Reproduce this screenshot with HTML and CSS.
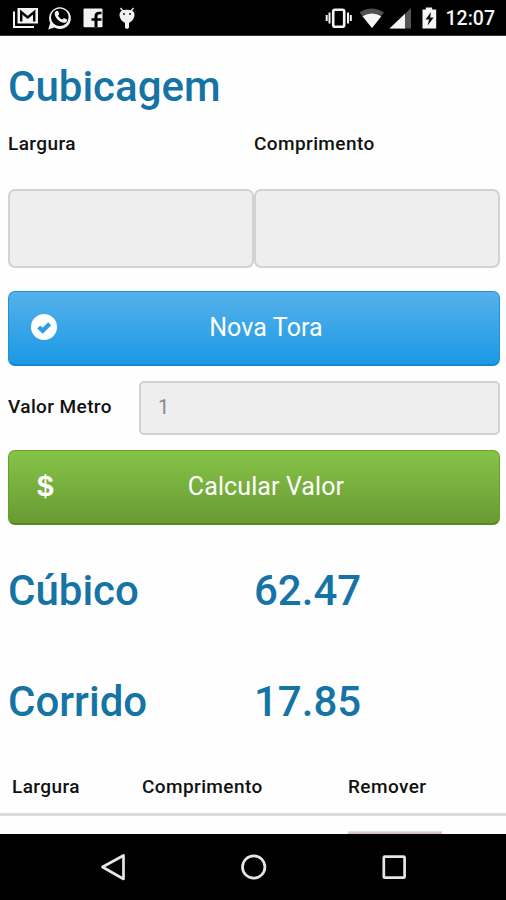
FILE: index.html
```html
<!DOCTYPE html>
<html lang="pt-BR">
<head>
<meta charset="utf-8">
<title>Cubicagem</title>
<link rel="stylesheet" href="styles.css">
</head>
<body>
<div class="phone">
  <header class="status">
    <svg width="150" height="36" viewBox="0 0 150 36" fill="#f2f2f2">
      <path d="M17.500 8H38v15.500H17.500z"/>
      <path d="M21.200 21.500V12l6.500 5.500 6.500-5.500v9.500" fill="none" stroke="#000" stroke-width="2.400"/>
      <path d="M14 11.500V27h20" fill="none" stroke="#f2f2f2" stroke-width="2"/>
      <path d="M48.200 29.500l2-6.500a10.900 10.900 0 1 1 4.300 4.600z"/>
      <circle cx="59.800" cy="17.300" r="8.800" fill="#000"/>
      <path d="M55.500 11.500c1.500-1.300 2.600-1 3.300 1.200l.5 1.500-1.300 1.500c1.200 2 2.500 3 4.300 3.800l1.700-1.400 3 1.500c.8.500-.4 3-2 3.200-4.500.8-10.300-5.300-10.300-8.800 0-1 .2-1.900.8-2.500z"/>
      <path d="M84.500 8.500h17q1 0 1 1v16.800q0 1-1 1h-17q-1 0-1-1V9.500q0-1 1-1z"/>
      <path d="M94.500 27.300v-6.500H91.500v-2.600h3v-2q0-4.500 4.500-4.500h2.500v2.600h-2q-2 0-2 2v1.900h4v2.600h-4v6.500z" fill="#000"/>
      <path d="M119.500 14.500q0-4.800 7.500-4.800t7.500 4.800c0 4-2.500 7-5.500 8.300v5q-2 2.200-4 0v-5c-3-1.300-5.500-4.300-5.500-8.300z"/>
      <path d="M123 11l-2.500-3M131 11l2.500-3" stroke="#f2f2f2" stroke-width="1.300"/>
      <circle cx="124" cy="14" r=".9" fill="#000"/><circle cx="130" cy="14" r=".9" fill="#000"/>
    </svg>
    <svg class="system" width="120" height="36" viewBox="320 0 120 36" fill="#f5f5f5">
      <rect x="333.200" y="9.700" width="11" height="17" rx="1.800" fill="none" stroke="#f5f5f5" stroke-width="2.600"/>
      <path d="M329.500 12.500v11M326.700 15v6M348 12.500v11M350.800 15v6" stroke="#f5f5f5" stroke-width="2"/>
      <path d="M359.500 12.500q12-8 24.500 0L372 28z" fill="#505050"/>
      <path d="M362.500 16.200q9.500-5.500 18.800 0L372 28z"/>
      <path d="M411 8v20.500h-21z" fill="#555"/>
      <path d="M405 13.800v14.700h-15.500z"/>
      <path d="M422.500 9.500h3.300V7.500h6.400v2h4v19h-13.700z"/>
      <path d="M431 12l-5.500 7.500h3.500l-1.300 6 6-8h-3.500z" fill="#111"/>
    </svg>
    <span class="clock">12:07</span>
  </header>

  <main class="content">
    <h1 class="title">Cubicagem</h1>
    <div class="pair labels"><label for="largura">Largura</label><label for="comprimento">Comprimento</label></div>
    <div class="pair"><input id="largura" class="field"><input id="comprimento" class="field"></div>
    <button class="btn blue">
      <svg class="btn-icon" width="28" height="28" viewBox="0 0 28 28"><circle cx="14" cy="14" r="13" fill="#fff"/><path d="M8.700 14l4 3.700 7-7" fill="none" stroke="#2e9fe2" stroke-width="4.400"/></svg>
      <span>Nova Tora</span>
    </button>
    <div class="price"><label for="valor">Valor Metro</label><input id="valor" class="field small" value="1"></div>
    <button class="btn green"><span class="btn-icon dollar">$</span><span>Calcular Valor</span></button>
    <div class="pair result"><span>Cúbico</span><span>62.47</span></div>
    <div class="pair result"><span>Corrido</span><span>17.85</span></div>
  </main>
  <div class="table-head"><span>Largura</span><span>Comprimento</span><span>Remover</span></div>
  <div class="table-row"><span class="remove"></span></div>

  <nav class="navbar">
    <svg width="506" height="66" viewBox="0 0 506 66" fill="none" stroke="#e6e6e6" stroke-width="2.700" stroke-linejoin="round">
      <path d="M123.500 21.500v23.500L102.500 33z"/>
      <circle cx="253.700" cy="33" r="11.200"/>
      <rect x="383.800" y="22.700" width="20.800" height="21" rx="1"/>
    </svg>
  </nav>
</div>
</body>
</html>
```

FILE: styles.css
```css
* { box-sizing: border-box; }

body {
  margin: 0;
  background: #fefefe;
  color: #111;
  font-family: Roboto, "Liberation Sans", sans-serif;
}

.phone {
  display: flex;
  flex-direction: column;
  width: 506px;
  height: 900px;
  overflow: hidden;
}

svg { display: block; }

.status {
  display: flex;
  flex: none;
  height: 36px;
  padding-right: 11px;
  background: #000;
  border-bottom: 1px solid #333;
}

.system { margin-left: 170px; }

.clock {
  margin-left: auto;
  color: #f5f5f5;
  font-size: 19.5px;
  font-weight: 500;
  line-height: 38px;
}

.content {
  flex: none;
  height: 722px;
  padding: 0 6px 0 8px;
}

.title, .result {
  color: #1574a5;
  font-size: 42px;
  font-weight: 500;
}

.title {
  margin: 0;
  padding-top: 26px;
  line-height: 50px;
}

.pair {
  display: grid;
  grid-template-columns: 1fr 1fr;
}

label, .table-head {
  font-size: 19px;
  font-weight: 500;
  letter-spacing: 0.4px;
}

.labels {
  height: 77px;
  padding-top: 21px;
  line-height: 22px;
}

.field {
  width: 100%;
  min-width: 0;
  height: 79px;
  padding: 0 17px;
  border: 2px solid #d2d2d2;
  border-radius: 7px;
  background: #eee;
  color: #888;
  font: 20px Roboto, "Liberation Sans", sans-serif;
}

.btn {
  display: flex;
  position: relative;
  align-items: center;
  justify-content: center;
  width: 492px;
  height: 75px;
  padding: 0 0 2px 24px;
  border-radius: 7px;
  color: #fff;
  font: 25px Roboto, "Liberation Sans", sans-serif;
  letter-spacing: 0.1px;
}

.blue {
  margin-top: 23px;
  border: 1px solid #1f93d8;
  border-bottom: 2px solid #1587cc;
  background: linear-gradient(#55b1ea, #1c99e5);
}

.green {
  margin-top: 15px;
  border: 1px solid #689f25;
  border-bottom: 2px solid #578a1c;
  background: linear-gradient(#86c448, #699a33);
}

.btn-icon {
  position: absolute;
  left: 21px;
  top: 21px;
}

.dollar {
  left: 28px;
  top: 19px;
  font: bold 30px/32px "Liberation Sans", sans-serif;
}

.price {
  display: grid;
  grid-template-columns: 131px 1fr;
  align-items: center;
  margin-top: 15px;
}

.price label { padding-bottom: 3px; }

.small {
  height: 54px;
  padding-bottom: 2px;
  border-radius: 5px;
}

.result {
  padding: 41px 0 20px;
  line-height: 50px;
}

.table-head {
  display: grid;
  flex: none;
  grid-template-columns: 130px 206px 1fr;
  height: 58px;
  padding: 18px 0 0 12px;
  border-bottom: 3px solid #dcdcdc;
  line-height: 22px;
}

.table-row {
  display: flex;
  flex: 1;
  align-items: flex-end;
  padding-left: 348px;
}

.remove {
  width: 94px;
  height: 3px;
  background: linear-gradient(#f3dfe3, #cfb3ba);
}

.navbar {
  flex: none;
  height: 66px;
  background: #000;
}
```
